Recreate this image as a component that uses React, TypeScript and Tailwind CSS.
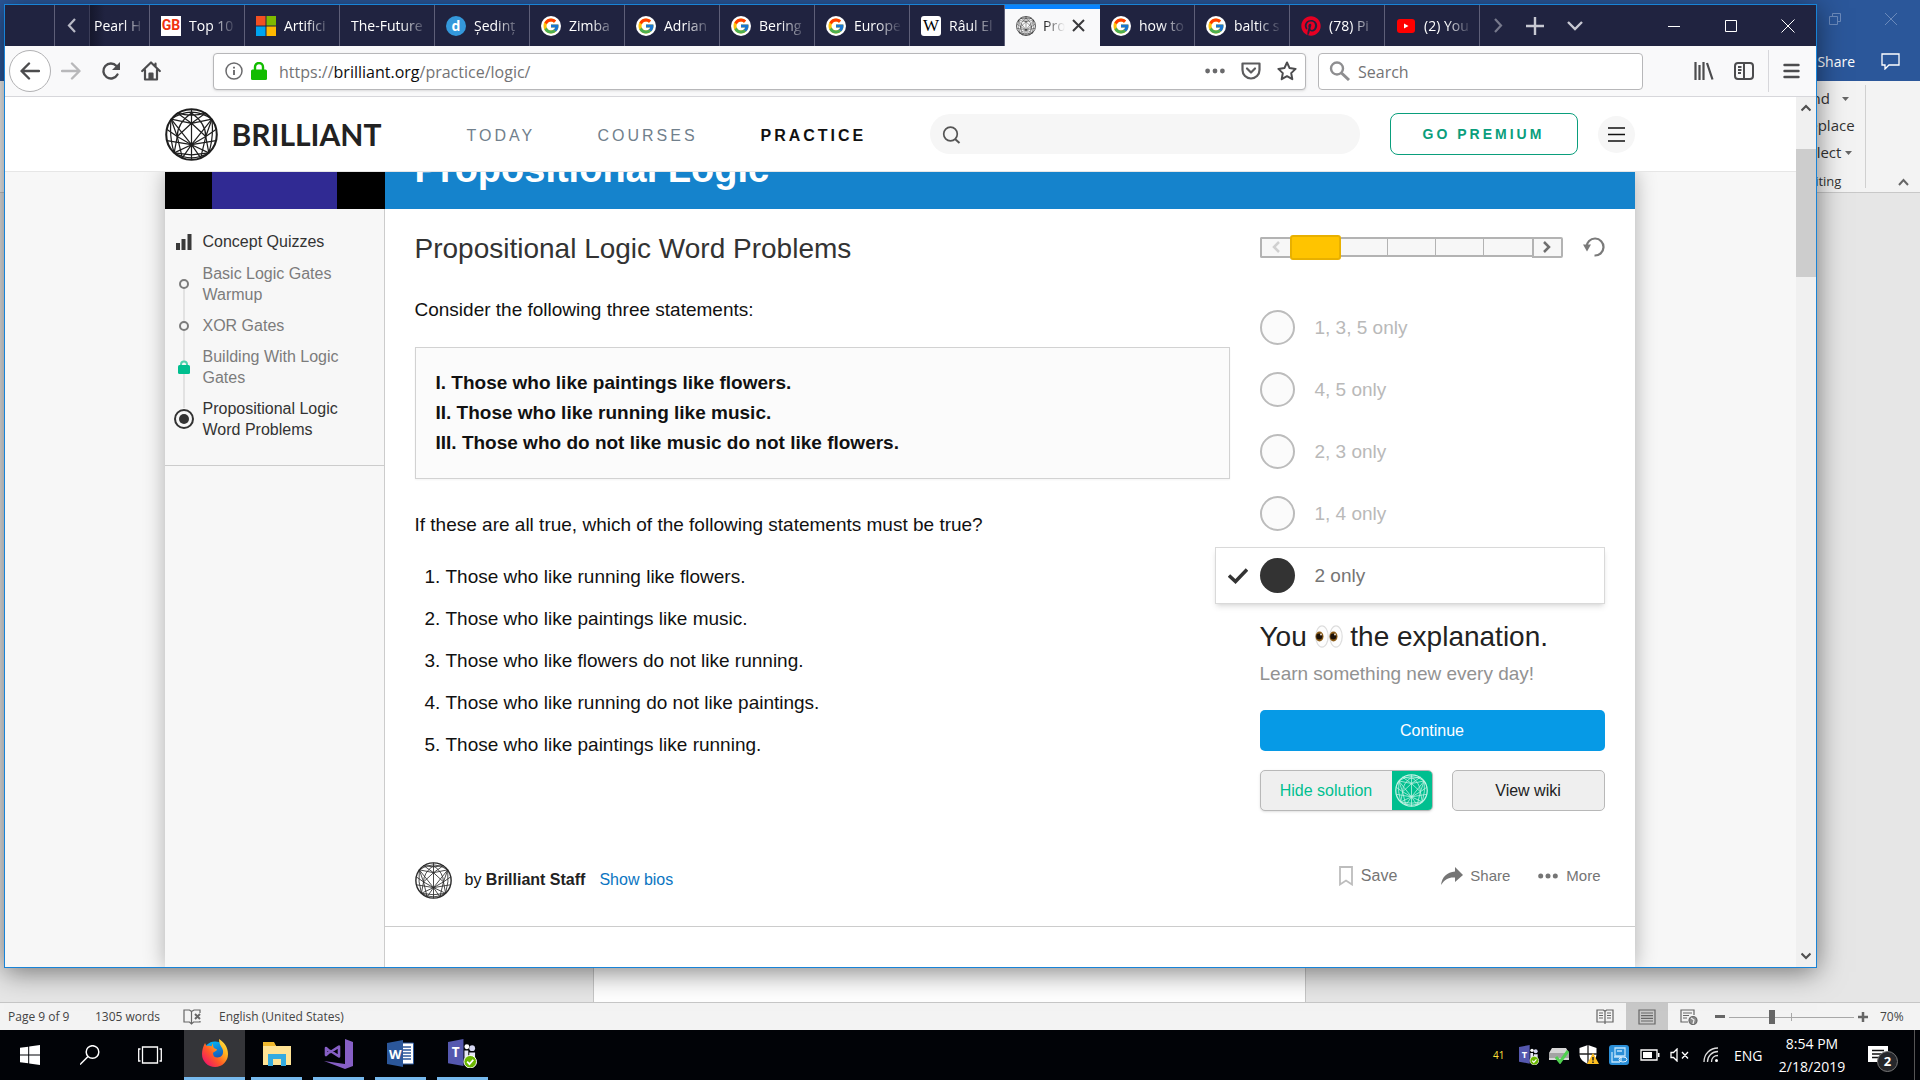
import type { ReactNode } from "react";
import { FcGoogle } from "react-icons/fc";
import { FaPinterest } from "react-icons/fa";

const system = "font-['Open_Sans','Noto_Sans',sans-serif]";

function Globe({ size, color }: { size: number; color: string }) {
  return (
    <svg width={size} height={size} viewBox="0 0 52 52" fill="none" stroke={color} strokeWidth="1.2" strokeLinejoin="round" aria-hidden="true">
      <circle cx="26" cy="26" r="24.8" strokeWidth="2" />
      <path d="M26 1V51M26 36L6 11M26 36L46 11M26 36L2 32M26 36L50 32M26 36L9 44M26 36L43 44M26 36L17 49M26 36L35 49" />
      <path d="M26 15L6 11L12 28L26 15L46 11L40 28L26 15M12 28L26 36L40 28M12 28L9 44L26 46L43 44L40 28M26 15L12 5M26 15L40 5" />
      <path d="M6 11Q26 -3 46 11M12 5Q26 9 40 5M6 11Q4 28 9 44M46 11Q48 28 43 44M9 44Q26 54 43 44M12 28Q12 15 26 5Q40 15 40 28M2 21L12 28M50 21L40 28M12 28L17 49M40 28L35 49" />
    </svg>
  );
}

function GoogleIcon() {
  return (
    <span className="flex size-5 items-center justify-center rounded-full bg-white">
      <FcGoogle size={18} />
    </span>
  );
}

const MicrosoftIcon = (
  <svg width="20" height="20" viewBox="0 0 20 20" aria-hidden="true">
    <path fill="#f25022" d="M0 0h9.5v9.5H0z" />
    <path fill="#7fba00" d="M10.500 0H20v9.500h-9.500z" />
    <path fill="#00a4ef" d="M0 10.500h9.500V20H0z" />
    <path fill="#ffb900" d="M10.500 10.500H20V20h-9.500z" />
  </svg>
);

const YoutubeIcon = (
  <svg width="20" height="20" viewBox="0 0 20 20" aria-hidden="true">
    <rect x="1" y="3" width="18" height="14" rx="3" fill="#f00" />
    <path d="M8 7.500v5l4.500-2.500z" fill="#fff" />
  </svg>
);

type Tab = { label: string; icon?: ReactNode; active?: boolean };

const tabs: Tab[] = [
  { label: "Top 10", icon: <span className="flex size-5 items-center justify-center bg-white font-['Roboto',sans-serif] text-[14px] font-bold text-[#f0320f]">GB</span> },
  { label: "Artifici", icon: MicrosoftIcon },
  { label: "The-Future" },
  { label: "Ședinț", icon: <span className="flex size-5 items-center justify-center rounded-full bg-[#3498db] text-[14px] leading-none font-bold text-white">d</span> },
  { label: "Zimba", icon: <GoogleIcon /> },
  { label: "Adrian", icon: <GoogleIcon /> },
  { label: "Bering", icon: <GoogleIcon /> },
  { label: "Europe", icon: <GoogleIcon /> },
  { label: "Râul El", icon: <span className="flex size-5 items-center justify-center rounded-[3px] bg-white font-['Liberation_Serif',serif] text-[17px] text-black">W</span> },
  { label: "Pro", icon: <Globe size={20} color="#333" />, active: true },
  { label: "how to", icon: <GoogleIcon /> },
  { label: "baltic s", icon: <GoogleIcon /> },
  { label: "(78) Pi", icon: <span className="rounded-full bg-white"><FaPinterest size={20} color="#e60023" /></span> },
  { label: "(2) You", icon: YoutubeIcon },
];

const fade = "[mask-image:linear-gradient(to_right,black_45%,transparent_98%)]";

function TabButton({ tab }: { tab: Tab }) {
  if (tab.active) {
    return (
      <div className="flex w-[95px] shrink-0 items-center gap-[7px] border-t-4 border-[#0a84ff] bg-[#f9f9fa] pb-1 pl-[11px] text-[#0c0c0d]">
        <span className="shrink-0">{tab.icon}</span>
        <span className="w-[22px] shrink-0 text-[14px] whitespace-nowrap [mask-image:linear-gradient(to_right,black,transparent)]">{tab.label}</span>
        <button aria-label="Close tab" className="shrink-0">
          <svg width="13" height="13" viewBox="0 0 13 13" stroke="#3a3a3c" strokeWidth="2"><path d="M1 1l11 11M12 1L1 12" /></svg>
        </button>
      </div>
    );
  }
  return (
    <button className="flex w-[95px] shrink-0 items-center gap-2 border-r border-[#5e5f78] pr-[6px] pl-[11px] text-left text-white">
      {tab.icon && <span className="shrink-0">{tab.icon}</span>}
      <span className={`min-w-0 flex-1 text-[14px] whitespace-nowrap ${tab.icon ? fade : "[mask-image:linear-gradient(to_right,black_65%,transparent)]"}`}>{tab.label}</span>
    </button>
  );
}

function TabStrip() {
  return (
    <div className="flex h-[41px] shrink-0 overflow-hidden bg-[#202340]">
      <div className="w-[50px] shrink-0 border-r border-[#5e5f78]" />
      <button aria-label="Scroll tabs left" className="flex w-[35px] shrink-0 items-center justify-center border-r border-[#3b3d58] text-[#b9bac6]">
        <svg width="10" height="15" viewBox="0 0 10 15" fill="none" stroke="currentColor" strokeWidth="2.2"><path d="M8 1L2 7.500l6 6.500" /></svg>
      </button>
      <button className="flex w-[60px] shrink-0 items-center border-r border-[#5e5f78] bg-linear-to-r from-[#15172c] to-[#202340] to-25% pl-1 text-left text-white">
        <span className="w-[50px] text-[14px] whitespace-nowrap [mask-image:linear-gradient(to_right,black_60%,transparent)]">Pearl H</span>
      </button>
      {tabs.map((t) => (
        <TabButton key={t.label} tab={t} />
      ))}
      <div className="flex flex-1 items-center text-[#c7c8d2]">
        <button aria-label="Scroll tabs right" className="flex w-9 justify-center text-[#77798c]">
          <svg width="10" height="15" viewBox="0 0 10 15" fill="none" stroke="currentColor" strokeWidth="2.200"><path d="M2 1l6 6.500L2 14" /></svg>
        </button>
        <button aria-label="New tab" className="flex w-[38px] justify-center">
          <svg width="18" height="18" viewBox="0 0 18 18" fill="none" stroke="currentColor" strokeWidth="2.400"><path d="M9 0v18M0 9h18" /></svg>
        </button>
        <button aria-label="List all tabs" className="flex w-[42px] justify-center">
          <svg width="16" height="10" viewBox="0 0 16 10" fill="none" stroke="currentColor" strokeWidth="2.400"><path d="M1 1l7 7 7-7" /></svg>
        </button>
      </div>
      <div className="flex items-center text-white">
        <button aria-label="Minimize" className="flex w-[57px] justify-center"><svg width="12" height="12" viewBox="0 0 12 12" stroke="currentColor"><path d="M0 6.500h12" /></svg></button>
        <button aria-label="Maximize" className="flex w-[57px] justify-center"><svg width="12" height="12" viewBox="0 0 12 12" fill="none" stroke="currentColor"><path d="M.5.5h11v11H.5z" /></svg></button>
        <button aria-label="Close" className="flex w-[57px] justify-center"><svg width="14" height="14" viewBox="0 0 14 14" stroke="currentColor"><path d="M.5.5l13 13M13.500.5L.5 13.500" /></svg></button>
      </div>
    </div>
  );
}

function Toolbar() {
  return (
    <div className="flex h-[51px] shrink-0 items-center border-b border-[#d7d7db] bg-[#f9f9fa] pr-4 pl-1 text-[#4c4c4e]">
      <button aria-label="Back" className="flex size-[42px] items-center justify-center rounded-full border border-[#b1b1b3] bg-white">
        <svg width="20" height="18" viewBox="0 0 20 18" fill="none" stroke="currentColor" strokeWidth="2.400" strokeLinecap="round" strokeLinejoin="round"><path d="M19 9H2M9 1.500L1.500 9 9 16.500" /></svg>
      </button>
      <button aria-label="Forward" className="flex w-10 justify-center text-[#b8b8ba]">
        <svg width="20" height="18" viewBox="0 0 20 18" fill="none" stroke="currentColor" strokeWidth="2.400" strokeLinecap="round" strokeLinejoin="round"><path d="M1 9h17M11 1.500L18.500 9 11 16.500" /></svg>
      </button>
      <button aria-label="Reload" className="flex w-10 justify-center">
        <svg width="20" height="20" viewBox="0 0 20 20" fill="none" stroke="currentColor" strokeWidth="2.400" strokeLinecap="round"><path d="M16.500 13.500A7.500 7.500 0 1 1 15.500 5" /><path d="M19 1v8h-8z" fill="currentColor" stroke="none" /></svg>
      </button>
      <button aria-label="Home" className="flex w-10 justify-center">
        <svg width="20" height="20" viewBox="0 0 20 20" fill="none" stroke="currentColor" strokeWidth="2.200" strokeLinecap="round" strokeLinejoin="round"><path d="M1.200 10L10 1.500 18.800 10M4 9v9.500h12V9M14.500 2.500v3" /><path d="M8.500 18v-5.500h3V18" fill="currentColor" /></svg>
      </button>
      <div className="ml-[42px] flex h-[37px] flex-1 items-center rounded-sm border border-[#b7b7b9] bg-white pr-2 pl-[11px] shadow-sm">
        <svg width="18" height="18" viewBox="0 0 18 18" fill="none" stroke="#6b6b6d" strokeWidth="1.500" aria-hidden="true"><circle cx="9" cy="9" r="8" /><path d="M9 8v5M9 4.800v1.700" strokeWidth="1.900" /></svg>
        <svg className="ml-2" width="16" height="18" viewBox="0 0 16 18" aria-hidden="true"><rect y="7.500" width="16" height="10.500" rx="1.500" fill="#12bc00" /><path d="M4 9V5a4 4 0 0 1 8 0v4" fill="none" stroke="#12bc00" strokeWidth="2.400" /></svg>
        <div role="textbox" aria-label="Address" className="ml-3 flex-1 pt-[2px] text-[16px] text-[#737375]">https://<span className="text-[#0c0c0d]">brilliant.org</span>/practice/logic/</div>
        <div className="flex items-center gap-4">
          <button aria-label="Page actions"><svg width="20" height="6" viewBox="0 0 20 6" fill="#6a6a6c"><circle cx="2.600" cy="3" r="2.400" /><circle cx="10" cy="3" r="2.400" /><circle cx="17.400" cy="3" r="2.400" /></svg></button>
          <button aria-label="Save to Pocket"><svg width="20" height="18" viewBox="0 0 20 18" fill="none" stroke="#5c5c5e" strokeWidth="2.200" strokeLinecap="round" strokeLinejoin="round"><path d="M1.500 1.500h17V8a8.500 8.500 0 0 1-17 0zM6 6.500l4 4 4-4" /></svg></button>
          <button aria-label="Bookmark"><svg width="20" height="20" viewBox="0 0 20 20" fill="none" stroke="#4c4c4e" strokeWidth="2" strokeLinejoin="round"><path d="M10 1.500l2.600 5.600 6 .8-4.400 4.200 1.100 6.100L10 15.200l-5.300 3 1.100-6.100L1.400 7.900l6-.8z" /></svg></button>
        </div>
      </div>
      <label className="ml-3 flex h-[37px] w-[325px] shrink items-center rounded-sm border border-[#b7b7b9] bg-white pl-[10px]">
        <svg width="21" height="20" viewBox="0 0 21 20" fill="none" stroke="#8e8e90" strokeWidth="2.400" aria-hidden="true"><circle cx="8" cy="7.500" r="6" /><path d="M12.500 12l7.500 7" strokeWidth="3" /></svg>
        <input aria-label="Search" placeholder="Search" className="ml-2 min-w-0 flex-1 bg-transparent pt-[2px] text-[16px] outline-none placeholder:text-[#737375]" />
      </label>
      <button aria-label="Library" className="ml-[51px]"><svg width="20" height="18" viewBox="0 0 20 18" fill="none" stroke="currentColor" strokeWidth="2.200"><path d="M1.500 0v18M5.500 3v15M9.500 0v18M13 1l5.500 16.500" /></svg></button>
      <button aria-label="Sidebars" className="ml-5"><svg width="20" height="18" viewBox="0 0 20 18" fill="none" stroke="currentColor" strokeWidth="2"><rect x="1" y="1" width="18" height="16" rx="3" /><path d="M10 1v16M4 5h3.500M4 8h3.500M4 11h3" /></svg></button>
      <div className="mx-[14px] h-[42px] w-px bg-[#d7d7db]" />
      <button aria-label="Open menu"><svg width="17" height="16" viewBox="0 0 17 16" stroke="currentColor" strokeWidth="2.400" strokeLinecap="round"><path d="M1.500 2h14M1.500 8h14M1.500 14h14" /></svg></button>
    </div>
  );
}

function SiteHeader() {
  return (
    <header className="relative z-10 border-b border-[#e6e6e6] bg-white pr-[2px]">
      <div className="mx-auto flex h-[74px] max-w-[1470px] items-center">
        <a href="#home" className="flex w-[302px] items-center gap-[14px] text-[#222]">
          <Globe size={53} color="#1e1e1e" />
          <span className="font-['Lato',sans-serif] text-[30px] leading-none font-bold">BRILLIANT</span>
        </a>
        <nav className="flex flex-1 pt-[3px] text-[16px] tracking-[3px]">
          <a href="#today" className="w-[131px] text-[#71808c]">TODAY</a>
          <a href="#courses" className="w-[163px] text-[#71808c]">COURSES</a>
          <a href="#practice" className="font-bold text-[#111]">PRACTICE</a>
        </nav>
        <label className="flex h-10 w-[430px] items-center rounded-full bg-[#f6f6f6] pl-3">
          <svg width="19" height="19" viewBox="0 0 19 19" fill="none" stroke="#555" strokeWidth="1.700" aria-hidden="true"><circle cx="8.500" cy="9" r="6.800" /><path d="M13 14l4.500 4" strokeWidth="2" /></svg>
          <input aria-label="Search Brilliant" className="min-w-0 flex-1 bg-transparent px-2 outline-none" />
        </label>
        <button className="ml-[30px] h-[42px] w-[188px] rounded-lg border border-[#0a9e7c] text-[14px] font-bold tracking-[3px] text-[#0a9e7c]">GO PREMIUM</button>
        <button aria-label="Menu" className="ml-5 flex size-[37px] items-center justify-center rounded-full bg-[#f6f6f6]">
          <svg width="17" height="15" viewBox="0 0 17 15" stroke="#111" strokeWidth="1.500"><path d="M0 1h17M0 7.500h17M0 14h17" /></svg>
        </button>
      </div>
    </header>
  );
}

const quizzes: { title: string; state: "open" | "locked" | "current" }[] = [
  { title: "Basic Logic Gates Warmup", state: "open" },
  { title: "XOR Gates", state: "open" },
  { title: "Building With Logic Gates", state: "locked" },
  { title: "Propositional Logic Word Problems", state: "current" },
];

function Marker({ state }: { state: "open" | "locked" | "current" }) {
  if (state === "open") return <span className="size-[10px] rounded-full border-2 border-[#7c7c7c] bg-[#f7f7f7]" />;
  if (state === "locked")
    return (
      <svg width="12" height="14" viewBox="0 0 12 14" aria-label="Locked" role="img">
        <path d="M3 6V4.500a3 3 0 0 1 6 0V6" fill="#f7f7f7" stroke="#4fd3ae" strokeWidth="2" />
        <rect y="5" width="12" height="9" rx="1.500" fill="#00bf8f" />
      </svg>
    );
  return (
    <span className="flex size-5 items-center justify-center rounded-full border-2 border-[#333] bg-[#f7f7f7]">
      <span className="size-[10px] rounded-full bg-[#333]" />
    </span>
  );
}

function Sidebar() {
  return (
    <aside className="w-[220px] shrink-0 border-r border-[#ccc] bg-[#f7f7f7]">
      <div className="border-b border-[#ccc] pt-[22px] pr-5 pb-[25px] pl-[9px] text-[16px] leading-[21px] text-[#333]">
        <div className="flex items-center gap-[9px]">
          <svg className="mx-[2px]" width="16" height="16" viewBox="0 0 16 16" fill="#3a3a3a" aria-hidden="true"><path d="M0 9h4v7H0zM5.500 5h4v11h-4zM11.500 0h4v16h-4z" /></svg>
          <h2>Concept Quizzes</h2>
        </div>
        <ul className="relative mt-[11px] flex flex-col gap-[10px]">
          <li aria-hidden="true" className="absolute top-6 bottom-8 left-[9px] w-[2px] bg-[#e2e2e2]" />
          {quizzes.map((q) => (
            <li key={q.title} className="relative flex items-center gap-[9px]">
              <span className="flex w-5 shrink-0 justify-center"><Marker state={q.state} /></span>
              <a href="#quiz" className={q.state === "current" ? "text-[#333]" : "text-[#7c7c7c]"}>{q.title}</a>
            </li>
          ))}
        </ul>
      </div>
    </aside>
  );
}

function Progress() {
  return (
    <div className="flex h-8 items-center">
      <button aria-label="Previous problem" className="flex h-[21px] w-[30px] items-center justify-center rounded-l-xs border-2 border-r-0 border-[#b3b3b3] bg-[#f7f7f7]">
        <svg width="8" height="12" viewBox="0 0 8 12" fill="none" stroke="#d0d0d0" strokeWidth="2.500"><path d="M7 1L2 6l5 5" /></svg>
      </button>
      <span className="h-[25px] w-[51px] rounded-[3px] border-2 border-[#e8b000] bg-[#ffc400]" />
      <span className="grid h-5 w-[191px] grid-cols-4 border-y-2 border-[#b3b3b3] bg-[#f7f7f7]">
        <span className="border-r border-[#b3b3b3]" />
        <span className="border-r border-[#b3b3b3]" />
        <span className="border-r border-[#b3b3b3]" />
        <span />
      </span>
      <button aria-label="Next problem" className="flex h-[21px] w-[31px] items-center justify-center rounded-r-xs border-2 border-[#b3b3b3] bg-[#f7f7f7]">
        <svg width="8" height="12" viewBox="0 0 8 12" fill="none" stroke="#6e6e6e" strokeWidth="2.500"><path d="M1 1l5 5-5 5" /></svg>
      </button>
      <button aria-label="Restart" className="ml-5">
        <svg width="22" height="20" viewBox="0 0 22 20" fill="none" stroke="#7a7a7a" strokeWidth="2.200"><path d="M3.500 10a8.500 8.500 0 1 1 8 8.500" /><path d="M0 7.500h8l-4 7z" fill="#7a7a7a" stroke="none" /></svg>
      </button>
    </div>
  );
}

const answers = ["1, 3, 5 only", "4, 5 only", "2, 3 only", "1, 4 only"];

function Answers() {
  return (
    <fieldset className="mt-9 flex flex-col gap-[5px] text-[19px]">
      <legend className="sr-only">Answer</legend>
      {answers.map((a) => (
        <label key={a} className="flex h-[57px] items-center gap-5 text-[#b9b9b9]">
          <input type="radio" name="answer" className="size-[35px] appearance-none rounded-full border-2 border-[#bcbcbc] bg-[#fbfbfb]" />
          {a}
        </label>
      ))}
      <label className="-ml-[45px] flex h-[57px] items-center border border-[#d9d9d9] bg-white pl-3 text-[#757575] shadow-md">
        <svg width="20" height="16" viewBox="0 0 20 16" fill="none" stroke="#333" strokeWidth="3.500" aria-hidden="true"><path d="M1 7.500l6.500 6L19 1.500" /></svg>
        <input type="radio" name="answer" defaultChecked className="mr-5 ml-3 size-[35px] appearance-none rounded-full bg-[#333]" />
        2 only
      </label>
    </fieldset>
  );
}

function Eyes() {
  return (
    <svg className="inline-block align-[-2px]" width="28" height="23" viewBox="0 0 28 23" role="img" aria-label="eyes">
      <ellipse cx="7" cy="11.500" rx="6.200" ry="10.700" fill="#fdfdfd" stroke="#dedede" strokeWidth="1.200" />
      <ellipse cx="21" cy="11.500" rx="6.200" ry="10.700" fill="#fdfdfd" stroke="#dedede" strokeWidth="1.200" />
      <ellipse cx="4.500" cy="11.500" rx="4" ry="5" fill="#8a5a16" />
      <ellipse cx="18.500" cy="11.500" rx="4" ry="5" fill="#8a5a16" />
      <circle cx="4.300" cy="11.500" r="3" fill="#1c120a" />
      <circle cx="18.300" cy="11.500" r="3" fill="#1c120a" />
      <circle cx="6" cy="9.500" r="1" fill="#e8d9c5" />
      <circle cx="20" cy="9.500" r="1" fill="#e8d9c5" />
    </svg>
  );
}

const claims = [
  "Those who like running like flowers.",
  "Those who like paintings like music.",
  "Those who like flowers do not like running.",
  "Those who like running do not like paintings.",
  "Those who like paintings like running.",
];

function Problem() {
  return (
    <main className="min-w-0 flex-1 bg-white text-[19px] leading-[30px] text-[#111]">
      <div className="grid grid-cols-[1fr_345px] gap-x-[30px] px-[30px] pt-[22px]">
        <section>
          <h1 className="text-[28px] leading-9 text-[#333]">Propositional Logic Word Problems</h1>
          <p className="mt-7">Consider the following three statements:</p>
          <div className="mt-[22px] border border-[#d2d2d2] bg-[#fbfbfb] p-5 font-bold shadow-xs">
            <p>I. Those who like paintings like flowers.</p>
            <p>II. Those who like running like music.</p>
            <p>III. Those who do not like music do not like flowers.</p>
          </div>
          <p className="mt-[31px]">If these are all true, which of the following statements must be true?</p>
          <ol className="mt-[22px] flex list-decimal flex-col gap-3 pl-[31px]">
            {claims.map((c) => (
              <li key={c}>{c}</li>
            ))}
          </ol>
        </section>
        <section>
          <Progress />
          <Answers />
          <h2 className="mt-4 text-[28px] leading-[34px] text-[#222]">
            You <Eyes /> the explanation.
          </h2>
          <p className="mt-2 leading-6 text-[#929292]">Learn something new every day!</p>
          <button className="mt-6 h-[41px] w-full rounded-[5px] bg-[#069ae6] text-[16px] leading-none text-white">Continue</button>
          <div className="mt-[19px] flex h-[41px] gap-[19px] text-[16px] leading-none">
            <button className="flex w-[173px] items-stretch overflow-hidden rounded-[5px] border border-[#b8b8b8] bg-[#efefef] text-[#00bf8f] shadow">
              <span className="flex flex-1 items-center justify-center">Hide solution</span>
              <span className="flex w-10 items-center justify-center bg-[#00bf8f]"><Globe size={33} color="#c4f3e5" /></span>
            </button>
            <button className="flex-1 rounded-[5px] border border-[#b8b8b8] bg-[#efefef] text-[#222]">View wiki</button>
          </div>
        </section>
      </div>
      <footer className="mt-12 flex items-start justify-between border-b border-[#ccc] pr-[34px] pb-[25px] pl-[30px] text-[16px]">
        <div className="flex h-[42px] items-center">
          <Globe size={37} color="#2c2c2c" />
          <span className="ml-[13px]">by <b className="text-[#222]">Brilliant Staff</b></span>
          <a href="#bios" className="ml-[14px] text-[#0b76c2]">Show bios</a>
        </div>
        <div className="flex h-[34px] items-center text-[#757575]">
          <button className="flex items-center gap-2">
            <svg width="14" height="20" viewBox="0 0 14 20" fill="none" stroke="#bdbdbd" strokeWidth="1.800"><path d="M1 1h12v17.500l-6-4-6 4z" /></svg>
            Save
          </button>
          <button className="ml-11 flex items-center gap-[7px] text-[15px]">
            <svg width="22" height="18" viewBox="0 0 22 18" fill="#757575"><path d="M14 0l8 8-8 7v-4.500C8 10 4 12 0 18 1 10 6 5 14 4.500z" /></svg>
            Share
          </button>
          <button className="ml-7 flex items-center gap-2 text-[15px]">
            <svg width="20" height="6" viewBox="0 0 20 6" fill="#757575"><circle cx="2.700" cy="3" r="2.500" /><circle cx="10" cy="3" r="2.500" /><circle cx="17.300" cy="3" r="2.500" /></svg>
            More
          </button>
        </div>
      </footer>
    </main>
  );
}

function Browser() {
  return (
    <div className="absolute top-1 right-[103px] bottom-28 left-1 flex flex-col overflow-hidden border border-[#1883d7] shadow-[0_4px_26px_rgba(0,0,0,0.5)]">
      <TabStrip />
      <Toolbar />
      <div className="flex min-h-0 flex-1 bg-[#f7f7f7] font-['Liberation_Sans',Arial,sans-serif]">
        <div className="flex min-w-0 flex-1 flex-col overflow-hidden">
          <SiteHeader />
          <div className="flex flex-1 flex-col pr-[2px]">
            <div className="mx-auto flex w-full max-w-[1470px] flex-1 flex-col shadow-[0_0_20px_rgba(0,0,0,0.3)]">
              <div className="flex h-[37px] shrink-0">
                <div className="flex w-[220px] shrink-0 justify-center bg-black"><div className="w-[125px] bg-[#302a93]" /></div>
                <div className="flex flex-1 items-end overflow-hidden bg-[#1583cc] pb-[21px] pl-[30px] text-[38px] leading-[38px] font-bold text-white">Propositional Logic</div>
              </div>
              <div className="flex flex-1">
                <Sidebar />
                <Problem />
              </div>
            </div>
          </div>
        </div>
        <div aria-hidden="true" className="flex w-5 shrink-0 flex-col items-center justify-between bg-[#f0f0f0]">
          <div className="flex w-full flex-col items-center">
            <div className="flex h-[52px] items-start pt-[7px]"><svg width="10" height="8" viewBox="0 0 10 8" fill="none" stroke="#505050" strokeWidth="2.200"><path d="M.5 6.500L5 2l4.500 4.500" /></svg></div>
            <div className="h-32 w-full bg-[#cdcdcd]" />
          </div>
          <svg className="mb-[7px]" width="10" height="8" viewBox="0 0 10 8" fill="none" stroke="#505050" strokeWidth="2.200"><path d="M.5 1.500L5 6l4.500-4.500" /></svg>
        </div>
      </div>
    </div>
  );
}

const caret = <svg width="7" height="4" viewBox="0 0 7 4" fill="#666"><path d="M0 0h7L3.500 4z" /></svg>;

function WordWindow() {
  return (
    <div className="flex min-h-0 flex-1 flex-col text-[#333]">
      <div className="flex h-[81px] shrink-0 flex-col items-end bg-[#2b579a] text-white">
        <div className="flex h-[38px] shrink-0 items-center gap-11 pr-[23px] text-[#6b8abb]">
          <svg width="12" height="12" viewBox="0 0 12 12" fill="none" stroke="currentColor"><path d="M.5 3.500h8v8h-8zM3.500 3V.5h8v8H9" /></svg>
          <svg width="12" height="12" viewBox="0 0 12 12" stroke="currentColor"><path d="M0 0l12 12M12 0L0 12" /></svg>
        </div>
        <div className="flex h-[43px] items-end gap-[26px] pr-5 pb-[9px] text-[14px]">
          <button>Share</button>
          <button aria-label="Comments" className="pb-[2px]"><svg width="19" height="17" viewBox="0 0 19 17" fill="none" stroke="#fff" strokeWidth="1.300"><path d="M1 1h17v11H8l-4 4v-4H1z" /></svg></button>
        </div>
      </div>
      <div className="flex h-28 shrink-0 justify-end border-b border-[#c8c8c8] bg-[#f3f3f3] text-[15px]">
        <div className="my-1 flex w-[66px] flex-col border-r border-[#d0d0d0] leading-[27px]">
          <button className="flex h-[27px] shrink-0 items-center gap-3">Find {caret}</button>
          <button className="flex h-[27px] shrink-0 items-center">Replace</button>
          <button className="flex h-[27px] shrink-0 items-center gap-1">Select {caret}</button>
          <span className="-mb-1 pt-[3px] text-[13px] leading-6">Editing</span>
        </div>
        <button aria-label="Collapse the ribbon" className="flex w-[54px] items-end pb-[6px] pl-8">
          <svg width="11" height="8" viewBox="0 0 11 8" fill="none" stroke="#666" strokeWidth="2"><path d="M1 7l4.500-5L10 7" /></svg>
        </button>
      </div>
      <div className="flex flex-1 justify-center bg-[#e6e6e6] pr-[22px]">
        <div className="w-[713px] border-x border-[#c6c6c6] bg-white" />
      </div>
      <div className="flex h-7 shrink-0 items-center justify-between border-t border-[#c6c6c6] bg-[#f3f3f3] text-[12px] text-[#444]">
        <div className="flex items-center pl-2">
          <span className="w-[87px]">Page 9 of 9</span>
          <span className="w-[88px]">1305 words</span>
          <svg width="18" height="16" viewBox="0 0 18 16" fill="none" stroke="#666" strokeWidth="1.200" aria-hidden="true"><path d="M17 4V1h-6L8.500 2.500 6.500 1H1v12h5.500l2 2 2-2H17v-1M8.500 2.500V15" /><path d="M12 5l5 5M17 5l-5 5" strokeWidth="2" /></svg>
          <span className="ml-[18px]">English (United States)</span>
        </div>
        <div className="flex h-full items-center">
          <button aria-label="Read mode" className="flex w-[42px] justify-center"><svg width="18" height="15" viewBox="0 0 18 15" fill="none" stroke="#666" strokeWidth="1.200"><path d="M9 2v13M1 1h6.500L9 2.500 10.500 1H17v12H1zM3 4h4M3 6.500h4M3 9h4M11 4h4M11 6.500h4M11 9h4" /></svg></button>
          <button aria-label="Print layout" className="flex h-full w-[42px] items-center justify-center bg-[#c8c8c8]"><svg width="18" height="16" viewBox="0 0 18 16" fill="none" stroke="#666" strokeWidth="1.200"><path d="M1 1h16v14H1zM3 4h12M3 6.700h12M3 9.300h12M3 12h12" /></svg></button>
          <button aria-label="Web layout" className="flex w-[42px] justify-center"><svg width="18" height="16" viewBox="0 0 18 16" fill="none" stroke="#666" strokeWidth="1.200"><path d="M8 13H1V1h13v5M3 4h9M3 6.500h6M3 9h4" /><circle cx="13" cy="11.500" r="4" fill="#888" /><path d="M11 9l3 2-1 4" stroke="#eee" /></svg></button>
          <svg className="ml-[5px]" width="10" height="3" viewBox="0 0 10 3" aria-hidden="true"><path d="M0 0h10v3H0z" fill="#666" /></svg>
          <span className="relative mx-1 h-4 w-[125px]">
            <span className="absolute inset-x-0 top-2 h-px bg-[#a8a8a8]" />
            <span className="absolute top-1 left-[62px] h-2 w-px bg-[#a8a8a8]" />
            <span className="absolute top-[1px] left-10 h-[14px] w-[6px] bg-[#666]" />
          </span>
          <svg width="10" height="10" viewBox="0 0 10 10" stroke="#666" strokeWidth="2.500"><path d="M5 0v10M0 5h10" /></svg>
          <span className="ml-3 w-10">70%</span>
        </div>
      </div>
    </div>
  );
}

const Firefox = (
  <svg width="28" height="29" viewBox="0 0 28 29">
    <defs>
      <linearGradient id="fx" x1="1" y1="0" x2="0.100" y2="0.900">
        <stop offset="0" stopColor="#fff44f" /><stop offset="0.350" stopColor="#ffb01f" /><stop offset="0.650" stopColor="#ff5a26" /><stop offset="1" stopColor="#f0126a" />
      </linearGradient>
      <linearGradient id="fb" x1="0" y1="0" x2="0.300" y2="1"><stop offset="0" stopColor="#00c0ff" /><stop offset="1" stopColor="#1b3fa5" /></linearGradient>
    </defs>
    <circle cx="14" cy="14" r="11.500" fill="url(#fb)" />
    <path d="M18 0c5 3 9 8 9 15a13 13 0 0 1-26 0c0-4 1-7 3-11l1.500 3c2-.5 3.500-.5 5 .2L12 4c0 2 0 4 1 5l3 1.500c0 1.500-3 2-4 3.500 0 3 1.500 4.500 4.500 4.500 4 0 6-3 5.500-7-.4-3-4-5-4-11.500z" fill="url(#fx)" />
  </svg>
);

const Explorer = (
  <svg width="28" height="24" viewBox="0 0 28 24">
    <path d="M0 1h11l2 3h15v19H0z" fill="#ffe394" /><path d="M0 0h11l2 4H0z" fill="#f0b92e" /><path d="M5 12h18v12h-5v-7h-8v7H5z" fill="#34abe0" />
  </svg>
);

const VisualStudio = (
  <svg width="29" height="30" viewBox="0 0 29 30" fill="#865fc5">
    <path d="M21 0l8 3v24l-8 3L0 22l21 3z" />
    <path d="M2 9l4.500 4L15 7.500v10L6.500 12 2 16z" fill="none" stroke="#865fc5" strokeWidth="2.600" strokeLinejoin="round" />
  </svg>
);

const WordIcon = (
  <svg width="27" height="27" viewBox="0 0 27 27">
    <path d="M13 3h13.500v21H13z" fill="#fff" stroke="#2b579a" /><path d="M16 7h8M16 10h8M16 13h8M16 16h8M16 19h8" stroke="#2b579a" strokeWidth="1.600" />
    <path d="M0 3l16-3v27L0 24z" fill="#2b579a" /><text x="2" y="18.500" fontSize="13" fontWeight="700" fill="#fff" fontFamily="Open Sans, sans-serif">W</text>
  </svg>
);

function Teams({ size }: { size: number }) {
  return (
    <svg width={size} height={size} viewBox="0 0 30 30" aria-hidden="true">
      <path d="M0 3l16-3v28L0 25z" fill="#5558af" /><text x="4" y="19" fontSize="14" fontWeight="700" fill="#fff" fontFamily="Open Sans, sans-serif">T</text>
      <circle cx="19.500" cy="8" r="2.500" fill="#fff" /><circle cx="25" cy="9.500" r="3" fill="#d5d6f2" /><path d="M17 12h4v10h-4zM22 14h6v8h-6z" fill="#e6e6f8" />
      <circle cx="23" cy="23.500" r="6.500" fill="#6bb700" stroke="#fff" strokeWidth="1" /><path d="M19.800 23.500l2.400 2.500 4-4.500" fill="none" stroke="#fff" strokeWidth="1.800" />
    </svg>
  );
}

const apps: { name: string; icon: ReactNode; active?: boolean }[] = [
  { name: "Firefox", icon: Firefox, active: true },
  { name: "File Explorer", icon: Explorer },
  { name: "Visual Studio", icon: VisualStudio },
  { name: "Word", icon: WordIcon },
  { name: "Teams", icon: <Teams size={29} /> },
];

function Taskbar() {
  return (
    <div className="flex h-[50px] shrink-0 items-stretch justify-between bg-[#010307] text-white">
      <div className="flex items-stretch">
        <button aria-label="Start" className="flex w-[60px] items-center justify-center">
          <svg width="20" height="20" viewBox="0 0 20 20" fill="#fff"><path d="M0 2.800L8.200 1.700v7.800H0zM9.200 1.500L20 0v9.500H9.200zM0 10.500h8.200v7.800L0 17.200zM9.200 10.500H20V20L9.200 18.500z" /></svg>
        </button>
        <button aria-label="Search" className="flex w-[60px] items-center justify-center">
          <svg width="20" height="20" viewBox="0 0 20 20" fill="none" stroke="#fff" strokeWidth="1.500"><circle cx="12.500" cy="7" r="6.300" /><path d="M8 11.500L0 19.500" /></svg>
        </button>
        <button aria-label="Task view" className="flex w-[60px] items-center justify-center">
          <svg width="24" height="18" viewBox="0 0 24 18" fill="none" stroke="#fff" strokeWidth="1.300"><path d="M4.500 1h15v16h-15zM2.500 3H.7v12h1.800M21.500 3h1.800v12h-1.800" /></svg>
        </button>
        <div className="ml-1 flex items-stretch">
          {apps.map((a) => (
            <button key={a.name} aria-label={a.name} className={a.active ? "flex w-[61px] flex-col bg-[#343539]" : "mr-[5px] ml-[6px] flex w-[51px] flex-col"}>
              <span className="flex w-full flex-1 items-center justify-center">{a.icon}</span>
              <span className="h-[3px] w-full bg-[#76b9ed]" />
            </button>
          ))}
        </div>
      </div>
      <div className="flex items-center">
        <span className="w-[26px] text-[10px] text-[#ffe03a]">41</span>
        <span className="mr-[10px]"><Teams size={20} /></span>
        <svg className="mr-[10px]" width="20" height="18" viewBox="0 0 20 18" aria-hidden="true"><path d="M3 2h14l3 5v7H0V7z" fill="#d6d6d6" /><path d="M0 7h20v5H0z" fill="#a3a3a3" /><path d="M7 11l4 5 8-11" fill="none" stroke="#4fd04f" strokeWidth="3" /></svg>
        <svg className="mr-[10px]" width="20" height="20" viewBox="0 0 20 20" aria-hidden="true"><path d="M9 0l8.500 3v6c0 5-4 8-8.500 10C4.500 17 .5 14 .5 9V3z" fill="#fff" /><path d="M9 0v19M0 9h18" stroke="#222" strokeWidth="1.300" /><path d="M14 8l6 11H8z" fill="#ffc021" /><path d="M14 12v3.500M14 16.500v1.500" stroke="#222" strokeWidth="1.500" /></svg>
        <svg className="mr-[11px]" width="20" height="20" viewBox="0 0 20 20" aria-hidden="true"><rect width="20" height="20" rx="3" fill="#2a8fd8" /><path d="M6 3h10v8H6zM3 7v10h8M8 6h5M5 12h7v4" fill="none" stroke="#bfe3fb" strokeWidth="1.300" /><ellipse cx="14" cy="14.500" rx="4" ry="2.500" fill="none" stroke="#dff2ff" /></svg>
        <svg className="mr-[10px]" width="20" height="12" viewBox="0 0 20 12" aria-hidden="true"><path d="M1 1h16v10H1z" fill="none" stroke="#fff" strokeWidth="1.300" /><path d="M3 3h9v6H3zM18 4h1.500v4H18z" fill="#fff" /></svg>
        <svg className="mr-[13px]" width="20" height="14" viewBox="0 0 20 14" fill="none" stroke="#fff" strokeWidth="1.300" aria-hidden="true"><path d="M1 4.500h2.500L7 1v12L3.500 9.500H1zM12 4l6 6.500M18 4l-6 6.500" /></svg>
        <svg className="mr-[15px]" width="16" height="16" viewBox="0 0 16 16" fill="none" stroke="#ddd" strokeWidth="1.300" aria-hidden="true"><path d="M1 15C1 7 7 1 15 1M4.500 15C4.500 9 9 4.500 15 4.500M8.500 15c0-4 2.500-6.500 6.500-6.500" /><circle cx="13.500" cy="13.500" r="1.500" fill="#fff" stroke="none" /></svg>
        <span className="w-[42px] text-[14px]">ENG</span>
        <div className="w-[72px] text-center text-[14px] leading-[23px] whitespace-nowrap"><div>8:54 PM</div><div>2/18/2019</div></div>
        <button aria-label="2 notifications" className="relative mr-[14px] ml-5 h-7 w-8">
          <svg className="mt-[2px]" width="20" height="20" viewBox="0 0 20 20"><path d="M0 0h20v16h-4v4l-4-4H0z" fill="#fff" /><path d="M4 4.500h12M4 8h12M4 11.500h12" stroke="#111" strokeWidth="1.300" /></svg>
          <span className="absolute top-[10px] left-[9px] flex size-[21px] items-center justify-center rounded-full border border-[#777] bg-[#26272b] text-[13px] font-bold">2</span>
        </button>
        <span className="h-full w-[6px] border-l border-[#555]" />
      </div>
    </div>
  );
}

export default function App() {
  return (
    <div className={`relative flex h-screen min-h-[600px] flex-col overflow-hidden ${system}`}>
      <WordWindow />
      <Taskbar />
      <Browser />
    </div>
  );
}
